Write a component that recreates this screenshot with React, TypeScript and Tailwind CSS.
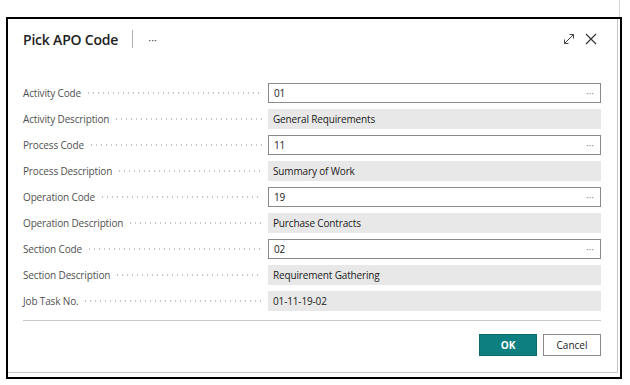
const rows: { label: string; value: string; editable: boolean }[] = [
  { label: "Activity Code", value: "01", editable: true },
  { label: "Activity Description", value: "General Requirements", editable: false },
  { label: "Process Code", value: "11", editable: true },
  { label: "Process Description", value: "Summary of Work", editable: false },
  { label: "Operation Code", value: "19", editable: true },
  { label: "Operation Description", value: "Purchase Contracts", editable: false },
  { label: "Section Code", value: "02", editable: true },
  { label: "Section Description", value: "Requirement Gathering", editable: false },
  { label: "Job Task No.", value: "01-11-19-02", editable: false },
]

function ExpandIcon() {
  return (
    <svg width="12" height="12" viewBox="0 0 12 12" fill="none" stroke="#444" strokeWidth="1">
      <path d="M1.5 10.5 L10.5 1.5" />
      <path d="M6.5 1.5 H10.5 V5.5" />
      <path d="M1.5 6.5 V10.5 H5.5" />
    </svg>
  )
}

function CloseIcon() {
  return (
    <svg width="12" height="12" viewBox="0 0 12 12" fill="none" stroke="#333" strokeWidth="1.2">
      <path d="M1 1 L11 11 M11 1 L1 11" />
    </svg>
  )
}

function FieldRow({ label, value, editable }: { label: string; value: string; editable: boolean }) {
  return (
    <div className="flex h-5 items-center">
      <div className="flex w-[245px] items-center pr-[6px]">
        <span className="text-[10px] tracking-[-0.15px] text-[#505050] whitespace-nowrap">{label}</span>
        <span className="ml-[5px] h-[2px] flex-1 bg-[radial-gradient(circle,#c4c4c4_0.7px,transparent_1px)] bg-[length:5px_2px] bg-repeat-x" />
      </div>
      {editable ? (
        <div className="flex h-5 flex-1 items-center justify-between border border-[#8a8a8a] bg-white pl-[5px] pr-[6px]">
          <span className="text-[10px] tracking-[-0.15px] text-[#212121]">{value}</span>
          <span className="text-[10px] leading-none text-[#888]">···</span>
        </div>
      ) : (
        <div className="flex h-5 flex-1 items-center bg-[#e8e8e8] pl-[5px]">
          <span className="text-[10px] tracking-[-0.15px] text-[#212121]">{value}</span>
        </div>
      )}
    </div>
  )
}

export default function App() {
  return (
    <div className="relative h-[385px] w-[630px] overflow-hidden bg-white font-['Open_Sans',sans-serif]">
      <div className="h-[17px] w-[620px] border-r border-[#d4d4d4]" />
      <div className="ml-[6px] h-[362px] w-[616px] border-2 border-black bg-white">
        <div className="h-[354px] w-[610px] border-r border-b border-[#c8c8c8] pl-[15px] pr-[16px]">
          <div className="flex h-10 items-center">
            <span className="text-[14px] font-semibold tracking-[-0.2px] text-[#212121]">Pick APO Code</span>
            <span className="ml-[14px] h-[18px] w-px bg-[#b0b0b0]" />
            <span className="ml-[15px] text-[11px] leading-none text-[#444]">···</span>
            <div className="ml-auto flex items-center gap-[10px] pr-[4px]">
              <ExpandIcon />
              <CloseIcon />
            </div>
          </div>
          <div className="mt-6 flex flex-col gap-[6px]">
            {rows.map((r) => (
              <FieldRow key={r.label} {...r} />
            ))}
          </div>
          <div className="mt-[9px] h-px bg-[#c8c8c8]" />
          <div className="mt-[13px] flex justify-end gap-[6px]">
            <button className="h-[22px] w-[58px] border border-[#0b6b6b] bg-[#0e7f80] text-[10px] font-bold text-white">
              OK
            </button>
            <button className="h-[22px] w-[58px] border border-[#8a8a8a] bg-white text-[10px] text-[#212121]">
              Cancel
            </button>
          </div>
        </div>
      </div>
    </div>
  )
}
